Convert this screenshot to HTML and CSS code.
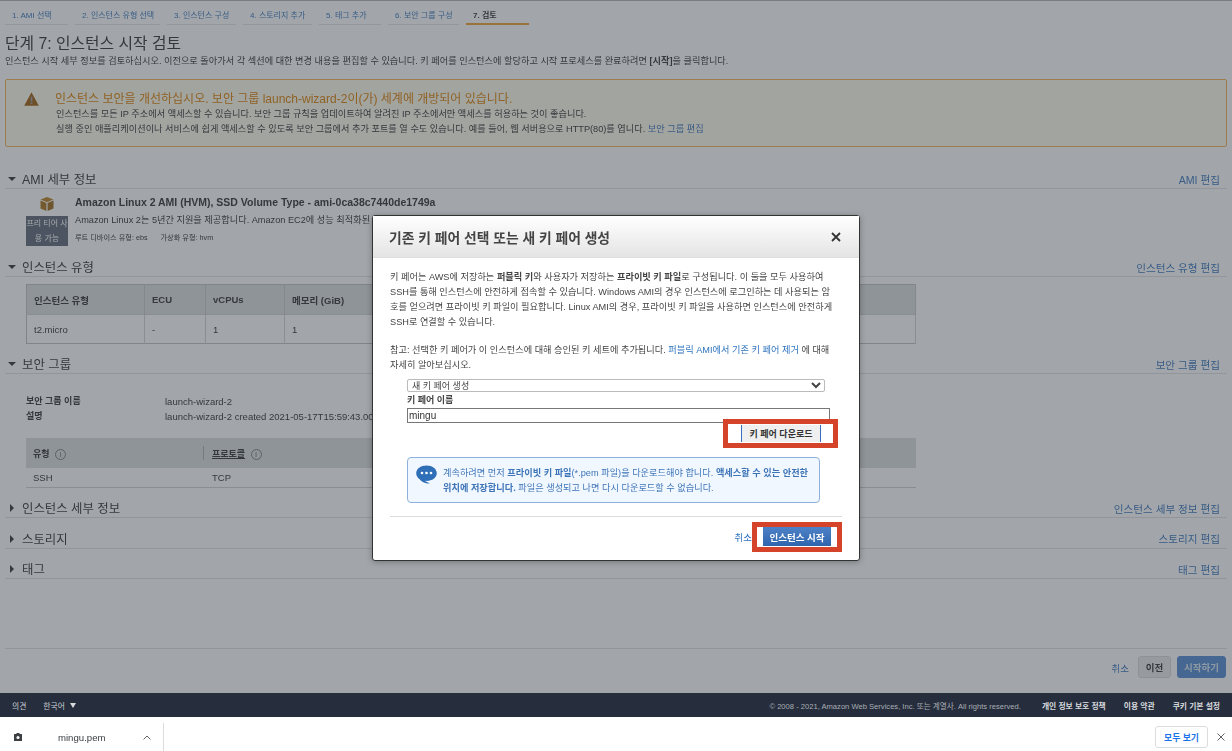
FILE: index.html
```html
<!DOCTYPE html>
<html lang="ko">
<head>
    <meta charset="UTF-8">
    <meta name="viewport" content="width=device-width, initial-scale=1.0">
    <title>단계 7: 인스턴스 시작 검토</title>
    <link rel="stylesheet" href="styles.css">
</head>
<body>
    <div class="page">
        <ul class="tabs">
            <li class="tab tab-1">1. AMI 선택</li>
            <li class="tab tab-2">2. 인스턴스 유형 선택</li>
            <li class="tab tab-3">3. 인스턴스 구성</li>
            <li class="tab tab-4">4. 스토리지 추가</li>
            <li class="tab tab-5">5. 태그 추가</li>
            <li class="tab tab-6">6. 보안 그룹 구성</li>
            <li class="tab tab-7 active">7. 검토</li>
        </ul>

        <h1>단계 7: 인스턴스 시작 검토</h1>
        <p class="intro">인스턴스 시작 세부 정보를 검토하십시오. 이전으로 돌아가서 각 섹션에 대한 변경 내용을 편집할 수 있습니다. 키 페어를 인스턴스에 할당하고 시작 프로세스를 완료하려면 <b>[시작]</b>을 클릭합니다.</p>

        <div class="warning">
            <svg class="warning-icon" viewBox="0 0 14 13" width="15" height="14">
                <path d="M7 0.3 L13.8 12.7 H0.2 Z" fill="#a8691f"/>
                <rect x="6.2" y="4.4" width="1.6" height="4.4" fill="#a2a6aa"/>
                <rect x="6.2" y="9.6" width="1.6" height="1.6" fill="#a2a6aa"/>
            </svg>
            <div>
                <div class="warning-title">인스턴스 보안을 개선하십시오. 보안 그룹 launch-wizard-2이(가) 세계에 개방되어 있습니다.</div>
                <p class="warning-line">인스턴스를 모든 IP 주소에서 액세스할 수 있습니다. 보안 그룹 규칙을 업데이트하여 알려진 IP 주소에서만 액세스를 허용하는 것이 좋습니다.</p>
                <p class="warning-line">실행 중인 애플리케이션이나 서비스에 쉽게 액세스할 수 있도록 보안 그룹에서 추가 포트를 열 수도 있습니다. 예를 들어, 웹 서버용으로 HTTP(80)를 엽니다. <a href="#">보안 그룹 편집</a></p>
            </div>
        </div>

        <div class="section-head first">
            <h2><span class="caret-down"></span>AMI 세부 정보</h2>
            <a href="#">AMI 편집</a>
        </div>
        <div class="ami">
            <div class="ami-left">
                <svg class="cube" viewBox="0 0 14 14" width="14" height="14">
                    <path d="M7 0 L13.5 2.6 L7 5.2 L0.5 2.6 Z" fill="#c08c35"/>
                    <path d="M0.5 3.6 L6.4 6 V14 L0.5 11.4 Z" fill="#b07c2a"/>
                    <path d="M13.5 3.6 L7.6 6 V14 L13.5 11.4 Z" fill="#a8742a"/>
                </svg>
                <div class="badge">프리 티어 사<br>용 가능</div>
            </div>
            <div class="ami-right">
                <div class="ami-title">Amazon Linux 2 AMI (HVM), SSD Volume Type - ami-0ca38c7440de1749a</div>
                <div class="ami-desc">Amazon Linux 2는 5년간 지원을 제공합니다. Amazon EC2에 성능 최적화된 Linux 커널을 제공합니다.</div>
                <div class="ami-meta"><span>루트 디바이스 유형: ebs</span><span>가상화 유형: hvm</span></div>
            </div>
        </div>

        <div class="section-head after-ami">
            <h2><span class="caret-down"></span>인스턴스 유형</h2>
            <a href="#">인스턴스 유형 편집</a>
        </div>
        <table class="type-table">
            <tr>
                <th class="col-type">인스턴스 유형</th>
                <th class="col-ecu">ECU</th>
                <th class="col-cpu">vCPUs</th>
                <th>메모리 (GiB)</th>
            </tr>
            <tr>
                <td>t2.micro</td>
                <td>-</td>
                <td>1</td>
                <td>1</td>
            </tr>
        </table>

        <div class="section-head">
            <h2><span class="caret-down"></span>보안 그룹</h2>
            <a href="#">보안 그룹 편집</a>
        </div>
        <dl class="group-info">
            <dt>보안 그룹 이름</dt>
            <dd>launch-wizard-2</dd>
            <dt>설명</dt>
            <dd>launch-wizard-2 created 2021-05-17T15:59:43.000+09:00</dd>
        </dl>
        <table class="rule-table">
            <tr>
                <th class="col-rule">유형 <span class="info">i</span></th>
                <th class="col-proto"><span class="sep">프로토콜</span> <span class="info">i</span></th>
            </tr>
            <tr>
                <td>SSH</td>
                <td>TCP</td>
            </tr>
        </table>

        <div class="section-head closed">
            <h2><span class="caret-right"></span>인스턴스 세부 정보</h2>
            <a href="#">인스턴스 세부 정보 편집</a>
        </div>
        <div class="section-head closed">
            <h2><span class="caret-right"></span>스토리지</h2>
            <a href="#">스토리지 편집</a>
        </div>
        <div class="section-head closed">
            <h2><span class="caret-right"></span>태그</h2>
            <a href="#">태그 편집</a>
        </div>

        <div class="actions">
            <a href="#">취소</a>
            <button class="btn-prev">이전</button>
            <button class="btn-start">시작하기</button>
        </div>

        <div class="overlay"></div>
    </div>

    <div class="footer">
        <span>의견</span>
        <span class="lang">한국어 <span class="caret-lang"></span></span>
        <span class="copyright">© 2008 - 2021, Amazon Web Services, Inc. 또는 계열사. All rights reserved.</span>
        <a href="#">개인 정보 보호 정책</a>
        <a href="#">이용 약관</a>
        <a href="#">쿠키 기본 설정</a>
    </div>

    <div class="shelf">
        <svg class="file-icon" viewBox="0 0 10 10" width="10" height="10">
            <path d="M1 2 H3 L4 1 H6 L7 2 H9 V9 H1 Z" fill="#3c4043"/>
            <circle cx="5" cy="5.4" r="1.5" fill="#fff"/>
        </svg>
        <span class="file-name">mingu.pem</span>
        <svg class="chevron" viewBox="0 0 8 5" width="8" height="5">
            <path d="M0.6 4.4 L4 1 L7.4 4.4" fill="none" stroke="#5f6368" stroke-width="1"/>
        </svg>
        <span class="shelf-line"></span>
        <button class="show-all">모두 보기</button>
        <svg class="shelf-close" viewBox="0 0 8 8" width="8" height="8">
            <path d="M0.5 0.5 L7.5 7.5 M7.5 0.5 L0.5 7.5" stroke="#5f6368" stroke-width="1"/>
        </svg>
    </div>

    <div class="modal">
        <div class="modal-head">
            <h3>기존 키 페어 선택 또는 새 키 페어 생성</h3>
            <svg class="modal-close" viewBox="0 0 10 10" width="10" height="10">
                <path d="M1 1 L9 9 M9 1 L1 9" stroke="#333" stroke-width="1.8"/>
            </svg>
        </div>
        <div class="modal-body">
            <p>키 페어는 AWS에 저장하는 <b>퍼블릭 키</b>와 사용자가 저장하는 <b>프라이빗 키 파일</b>로 구성됩니다. 이 둘을 모두 사용하여<br>SSH를 통해 인스턴스에 안전하게 접속할 수 있습니다. Windows AMI의 경우 인스턴스에 로그인하는 데 사용되는 암<br>호를 얻으려면 프라이빗 키 파일이 필요합니다. Linux AMI의 경우, 프라이빗 키 파일을 사용하면 인스턴스에 안전하게<br>SSH로 연결할 수 있습니다.</p>
            <p class="note">참고: 선택한 키 페어가 이 인스턴스에 대해 승인된 키 세트에 추가됩니다. <a href="#">퍼블릭 AMI에서 기존 키 페어 제거</a> 에 대해<br>자세히 알아보십시오.</p>
            <div class="key-form">
                <select class="key-select">
                    <option>새 키 페어 생성</option>
                </select>
                <label class="key-label" for="key-name">키 페어 이름</label>
                <input class="key-input" id="key-name" type="text" value="mingu">
                <div class="key-download">
                    <button class="btn-download">키 페어 다운로드</button>
                </div>
                <div class="notice">
                    <svg class="notice-icon" viewBox="0 0 21 19" width="21" height="19">
                        <path d="M10.5 0.5 C16.3 0.5 20.8 3.9 20.8 8.2 C20.8 12.5 16.3 15.9 10.5 15.9 C9.9 15.9 9.4 15.9 8.9 15.8 C10.6 17 14 18.6 14 18.6 C9 18.8 5.2 16.5 3.6 14.2 C1.5 12.8 0.2 10.6 0.2 8.2 C0.2 3.9 4.7 0.5 10.5 0.5 Z" fill="#2f6fb8"/>
                        <circle cx="6" cy="8" r="1.3" fill="#fff"/>
                        <circle cx="10.5" cy="8" r="1.3" fill="#fff"/>
                        <circle cx="15" cy="8" r="1.3" fill="#fff"/>
                    </svg>
                    <p>계속하려면 먼저 <b>프라이빗 키 파일</b>(*.pem 파일)을 다운로드해야 합니다. <b>액세스할 수 있는 안전한<br>위치에 저장합니다.</b> 파일은 생성되고 나면 다시 다운로드할 수 없습니다.</p>
                </div>
            </div>
        </div>
        <div class="modal-foot">
            <a href="#">취소</a>
            <button class="btn-launch">인스턴스 시작</button>
        </div>
        <div class="mark mark-download"></div>
        <div class="mark mark-launch"></div>
    </div>
</body>
</html>
```

FILE: styles.css
```css
* {
    box-sizing: border-box;
}
body {
    margin: 0;
    height: 100vh;
    display: flex;
    flex-direction: column;
    overflow: hidden;
    background-color: #fff;
    color: #444;
    font-family: "Liberation Sans", "Noto Sans CJK KR", sans-serif;
    font-size: 9.2px;
    filter: blur(0.3px);
}
a {
    color: #4a7fc0;
    text-decoration: none;
}
p {
    margin: 0;
}
button {
    font-family: inherit;
}

/* page under the dimmed layer */
.page {
    position: relative;
    flex: 1;
    display: flex;
    flex-direction: column;
    padding: 0 5px;
    border-top: 1px solid #bbb;
    min-height: 0;
}
.overlay {
    position: absolute;
    top: -1px;
    left: 0;
    right: 0;
    bottom: 0;
    background-color: rgba(33, 44, 52, 0.42);
}
.tabs {
    display: flex;
    gap: 7px;
    height: 24px;
    margin: 0;
    padding: 0;
    list-style: none;
}
.tab {
    padding-top: 8px;
    padding-left: 7px;
    border-bottom: 1px solid #e6e6e6;
    color: #4a7fc0;
    font-size: 8px;
    white-space: nowrap;
}
.tab-1 { width: 63px; }
.tab-2 { width: 85px; }
.tab-3 { width: 69px; }
.tab-4 { width: 69px; }
.tab-5 { width: 62px; }
.tab-6 { width: 71px; }
.tab-7 { width: 63px; }
.tab.active {
    border-bottom: 2px solid #f0a83c;
    color: #444;
    font-weight: bold;
}
h1 {
    margin: 9px 0 0;
    height: 20px;
    font-size: 15.8px;
    font-weight: normal;
    line-height: 20px;
    color: #444;
}
.intro {
    height: 14px;
    line-height: 14px;
    font-size: 9.2px;
    white-space: nowrap;
}

.warning {
    display: flex;
    align-items: flex-start;
    height: 68px;
    margin-top: 11px;
    padding: 12px 0 0 18px;
    background-color: #fffbec;
    border: 1px solid #f6b95f;
    border-radius: 2px;
}
.warning-icon {
    margin: 0 16px 0 0;
    flex: none;
}
.warning-title {
    height: 15px;
    line-height: 15px;
    font-size: 12px;
    color: #e08a1a;
}
.warning-line {
    height: 15px;
    padding-left: 1px;
    line-height: 15px;
    font-size: 9.2px;
    white-space: nowrap;
}

.section-head {
    display: flex;
    justify-content: space-between;
    align-items: center;
    height: 20px;
    margin-top: 10px;
    padding: 1px 7px 0 0;
    border-bottom: 1px solid #e3e3e3;
}
.section-head.first {
    margin-top: 22px;
}
.section-head.after-ami {
    margin-top: 0;
}
.section-head.closed {
    margin-top: 10.5px;
}
.section-head a {
    font-size: 10.6px;
}
h2 {
    display: flex;
    align-items: center;
    margin: 0;
    font-size: 12.4px;
    font-weight: normal;
    color: #444;
}
.caret-down {
    width: 0;
    height: 0;
    margin: 0 6px 0 3px;
    border-left: 4px solid transparent;
    border-right: 4px solid transparent;
    border-top: 4px solid #444;
}
.caret-right {
    width: 0;
    height: 0;
    margin: 0 8px 0 5px;
    border-top: 4px solid transparent;
    border-bottom: 4px solid transparent;
    border-left: 4px solid #444;
}

.ami {
    display: flex;
    gap: 7px;
    height: 68px;
    padding-left: 21px;
}
.ami-left {
    width: 42px;
    display: flex;
    flex-direction: column;
    align-items: center;
    padding-top: 8px;
}
.cube {
    margin-bottom: 5px;
}
.badge {
    width: 42px;
    height: 30px;
    background-color: #6c7381;
    color: #fff;
    font-size: 8px;
    line-height: 15px;
    text-align: center;
    white-space: nowrap;
}
.ami-title {
    margin-top: 7px;
    height: 13px;
    line-height: 13px;
    font-size: 10.5px;
    font-weight: bold;
    color: #444;
    white-space: nowrap;
}
.ami-desc {
    margin-top: 5px;
    line-height: 13px;
    font-size: 9.2px;
    white-space: nowrap;
}
.ami-meta {
    display: flex;
    gap: 13px;
    margin-top: 6px;
    line-height: 10px;
    font-size: 7.2px;
}

table {
    border-collapse: collapse;
    table-layout: fixed;
    width: 890px;
    margin-left: 21px;
    font-size: 9.5px;
}
th {
    background-color: #dee0e0;
    text-align: left;
    font-weight: bold;
}
.type-table {
    margin-top: 7px;
    border: 1px solid #c4c6c8;
}
.type-table th {
    height: 30px;
    padding: 0 7px;
    border-right: 1px solid #c9cbcc;
}
.type-table td {
    height: 29px;
    padding: 0 7px;
    border-top: 1px solid #d4d6d6;
    border-right: 1px solid #d4d6d6;
}
.col-type { width: 118px; }
.col-ecu { width: 61px; }
.col-cpu { width: 79px; }

.group-info {
    display: grid;
    grid-template-columns: 139px 1fr;
    margin: 20px 0 0 21px;
    line-height: 15px;
    font-size: 9.5px;
}
.group-info dt {
    font-size: 9px;
    font-weight: bold;
}
.group-info dd {
    margin: 0;
    white-space: nowrap;
}
.rule-table {
    margin-top: 14px;
}
.rule-table th {
    height: 30px;
    padding: 0 7px;
    font-size: 9px;
}
.rule-table th.col-proto {
    padding-left: 9px;
    background-image: linear-gradient(#b4b6b8, #b4b6b8);
    background-repeat: no-repeat;
    background-position: 0 center;
    background-size: 1px 14px;
}
.rule-table td {
    height: 19px;
    padding: 0 7px;
    border-bottom: 1px solid #d4d6d6;
}
.rule-table td + td {
    padding-left: 9px;
}
.col-rule {
    width: 177px;
}
.sep {
    text-decoration: underline;
}
.info {
    display: inline-block;
    width: 11px;
    height: 11px;
    margin-left: 3px;
    border: 1px solid #888;
    border-radius: 50%;
    color: #666;
    font-size: 7px;
    font-weight: normal;
    line-height: 9px;
    text-align: center;
}

.actions {
    display: flex;
    justify-content: flex-end;
    align-items: flex-start;
    gap: 9px;
    margin-top: auto;
    height: 45px;
    padding: 7px 1px 0 0;
    border-top: 1px solid #e3e3e3;
}
.actions a {
    margin-top: 5px;
    font-size: 9.5px;
}
.actions button {
    height: 22px;
    border-radius: 3px;
    font-size: 9.5px;
    font-weight: bold;
}
.btn-prev {
    width: 33px;
    padding: 0;
    margin-right: -3px;
    background-color: #ececec;
    border: 1px solid #ddd;
    color: #444;
}
.btn-start {
    width: 49px;
    padding: 0;
    background-color: #5f93d6;
    border: 1px solid #5f93d6;
    color: #dfe8f2;
}

.footer {
    display: flex;
    align-items: center;
    gap: 18px;
    height: 24px;
    padding: 0 12px;
    background-color: #262e3d;
    color: #c9cdd2;
    font-size: 7.8px;
    white-space: nowrap;
}
.footer a {
    color: #d8dbde;
    font-weight: bold;
}
.lang {
    display: flex;
    align-items: center;
    gap: 5px;
    margin-left: -1px;
}
.caret-lang {
    width: 0;
    height: 0;
    border-left: 3px solid transparent;
    border-right: 3px solid transparent;
    border-top: 5px solid #d8dbde;
}
.copyright {
    margin-left: auto;
    margin-right: 3px;
    color: #a9adb3;
    font-size: 7.6px;
}

.shelf {
    display: flex;
    align-items: center;
    height: 34px;
    padding: 6px 0 0 13px;
}
.file-icon {
    margin-right: 35px;
}
.file-name {
    width: 85px;
    font-size: 9.6px;
    color: #3c4043;
}
.chevron {
    flex: none;
}
.shelf-line {
    align-self: flex-end;
    width: 1px;
    height: 28px;
    margin-left: 12px;
    background-color: #dadce0;
}
.show-all {
    width: 53px;
    height: 22px;
    margin-left: auto;
    padding: 0;
    background-color: #fff;
    border: 1px solid #dadce0;
    border-radius: 3px;
    color: #1a73e8;
    font-size: 8.8px;
    font-weight: bold;
}
.shelf-close {
    margin: 0 7px 0 9px;
}

/* key pair dialog */
.modal {
    position: absolute;
    top: 215px;
    left: 372px;
    width: 488px;
    height: 346px;
    background-color: #fff;
    border: 1px solid #333;
    border-radius: 3px;
    color: #444;
    box-shadow: 0 1px 6px rgba(0, 0, 0, 0.3);
}
.modal-head {
    display: flex;
    justify-content: space-between;
    align-items: center;
    height: 42px;
    padding: 0 18px 0 16px;
    background: linear-gradient(#fff, #e4e4e4);
    border-bottom: 1px solid #ddd;
}
h3 {
    margin: 0;
    font-size: 13.8px;
    font-weight: bold;
    color: #444;
}
.modal-body {
    padding: 12px 17px 0;
    font-size: 9.2px;
    line-height: 15px;
    white-space: nowrap;
}
.note {
    margin-top: 13px;
}
.modal a {
    color: #2f74c0;
}
.key-form {
    width: 423px;
    margin: 6px 0 0 17px;
}
.key-select {
    display: block;
    width: 418px;
    height: 13px;
    padding: 0;
    background-color: #fff;
    border: 1px solid #bbb;
    border-radius: 2px;
    font-family: inherit;
    font-size: 9px;
    color: #444;
}
.key-label {
    display: block;
    height: 15px;
    margin-top: 1px;
    font-size: 9px;
    font-weight: bold;
}
.key-input {
    display: block;
    width: 423px;
    height: 15px;
    padding: 0 1px;
    border: 1px solid #777;
    font-family: inherit;
    font-size: 10px;
    color: #333;
    outline: none;
}
.key-download {
    display: flex;
    justify-content: flex-end;
    margin-top: 2px;
    padding-right: 9px;
}
.btn-download {
    width: 80px;
    height: 17px;
    padding: 0;
    background-color: #efefef;
    border: none;
    border-left: 1px solid #3a6fc0;
    border-right: 1px solid #3a6fc0;
    color: #333;
    font-size: 9px;
    font-weight: bold;
}
.notice {
    display: flex;
    gap: 6px;
    width: 413px;
    height: 46px;
    margin-top: 15px;
    padding: 7px 0 0 8px;
    background-color: #f0f7fe;
    border: 1px solid #8fb0dc;
    border-radius: 4px;
    color: #3d74b8;
    line-height: 15px;
}
.notice p {
    padding-top: 1px;
}
.notice-icon {
    flex: none;
}
.modal-foot {
    display: flex;
    justify-content: flex-end;
    align-items: center;
    gap: 11px;
    height: 44px;
    margin: 13px 17px 0;
    padding: 0 11px 4px 0;
    border-top: 1px solid #ddd;
    font-size: 9.5px;
}
.btn-launch {
    width: 68px;
    height: 19px;
    padding: 0;
    background: linear-gradient(#4d82c8, #2f65ad);
    border: none;
    color: #fff;
    font-size: 9.5px;
    font-weight: bold;
}
.mark {
    position: absolute;
    border: 5px solid #d5432a;
}
.mark-download {
    top: 203px;
    left: 350px;
    width: 115px;
    height: 29px;
}
.mark-launch {
    top: 306px;
    left: 379px;
    width: 90px;
    height: 30px;
}
```
